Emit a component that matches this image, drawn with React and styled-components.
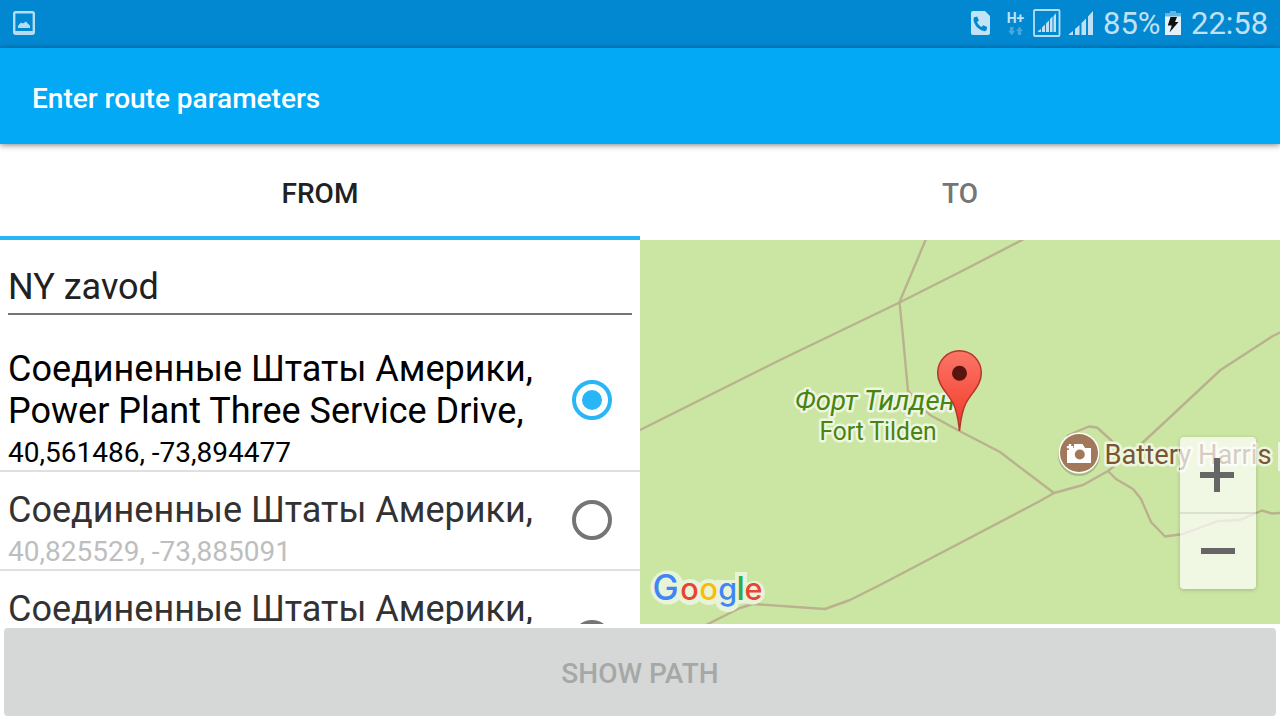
import React from 'react';
import styled, { createGlobalStyle } from 'styled-components';

const GlobalStyle = createGlobalStyle`
  * { box-sizing: border-box; }
  body { margin: 0; background: #fff; font-family: Roboto, "Noto Sans", sans-serif; }
`;

const Screen = styled.div`
  width: 1280px;
  height: 720px;
  display: flex;
  flex-direction: column;
  overflow: hidden;
  background: #fff;
`;

const StatusBar = styled.div`
  height: 48px;
  flex: none;
  display: flex;
  align-items: center;
  background: #0288d1;
  color: #c0e1f4;
  padding: 0 14px 0 12px;
  font-size: 31px;
  line-height: 48px;
`;

const StatusIcon = styled.svg`
  display: block;
  flex: none;
  height: 48px;
  width: ${(p) => p.$w}px;
  margin-left: ${(p) => p.$gap || 0}px;
`;

const Spacer = styled.div`
  flex: 1;
`;

const StatusText = styled.span`
  width: ${(p) => p.$w}px;
  margin-left: ${(p) => p.$gap}px;
  white-space: nowrap;
  font-size: ${(p) => p.$size}px;
`;

const AppBar = styled.header`
  height: 96px;
  flex: none;
  display: flex;
  align-items: center;
  padding: 4px 32px 0;
  background: #03a9f4;
  box-shadow: 0 1px 6px rgba(0, 0, 0, 0.5);
  z-index: 1;
`;

const Title = styled.h1`
  margin: 0;
  color: #fff;
  font-size: 28px;
  line-height: 33px;
  font-weight: 500;
`;

const Tabs = styled.nav`
  height: 96px;
  flex: none;
  display: grid;
  grid-template-columns: 1fr 1fr;
`;

const Tab = styled.div`
  display: flex;
  align-items: center;
  justify-content: center;
  padding-top: 6px;
  border-bottom: 4px solid ${(p) => (p.$active ? '#29b6f6' : 'transparent')};
  color: ${(p) => (p.$active ? '#212121' : '#757575')};
  font-size: 28px;
  font-weight: 500;
`;

const Body = styled.main`
  height: 384px;
  flex: none;
  display: grid;
  grid-template-columns: 640px 640px;
  overflow: hidden;
`;

const SearchPane = styled.section`
  height: 384px;
  overflow: hidden;
`;

const Field = styled.div`
  height: 75px;
  margin: 0 8px 16px;
  padding-top: 26px;
  border-bottom: 2px solid #757575;
  color: #212121;
  font-size: 36px;
  line-height: 42px;
`;

const Row = styled.div`
  height: ${(p) => (p.$lines === 2 ? 141 : 99)}px;
  display: flex;
  align-items: center;
  justify-content: space-between;
  padding: 0 28px 0 8px;
  border-bottom: 2px solid #dfdfdf;
`;

const Place = styled.div`
  align-self: flex-start;
  width: 540px;
  padding-top: 17px;
`;

const Address = styled.div`
  height: ${(p) => p.$lines * 42}px;
  white-space: pre-line;
  font-size: 36px;
  line-height: 42px;
  color: ${(p) => (p.$selected ? '#000' : '#323232')};
`;

const Coordinates = styled.div`
  padding-top: 4px;
  font-size: 28px;
  line-height: 33px;
  color: ${(p) => (p.$selected ? '#000' : '#bebebe')};
`;

const Radio = styled.span`
  width: 40px;
  height: 40px;
  flex: none;
  display: flex;
  align-items: center;
  justify-content: center;
  border: 4px solid ${(p) => (p.$selected ? '#29b6f6' : '#757575')};
  border-radius: 50%;
  margin-bottom: 1px;
  &::after {
    content: '';
    width: 20px;
    height: 20px;
    border-radius: 50%;
    background: ${(p) => (p.$selected ? '#29b6f6' : 'transparent')};
  }
`;

const MapPane = styled.section`
  position: relative;
  height: 384px;
  overflow: hidden;
  background: #cbe6a3;
`;

const MapDrawing = styled.svg`
  display: block;
  width: 640px;
  height: 384px;
  font-family: Roboto, "Noto Sans", sans-serif;
`;

const MapLabel = styled.text`
  fill: ${(p) => p.$color};
  stroke: #eef6e1;
  stroke-width: 5px;
  stroke-linejoin: round;
  paint-order: stroke;
  font-size: ${(p) => p.$size}px;
  font-style: ${(p) => (p.$italic ? 'italic' : 'normal')};
`;

const ZoomControls = styled.div`
  position: absolute;
  right: 24px;
  top: 197px;
  width: 76px;
  height: 152px;
  display: flex;
  flex-direction: column;
  background: rgba(255, 255, 255, 0.7);
  border-radius: 4px;
  box-shadow: 0 1px 4px rgba(0, 0, 0, 0.2);
`;

const ZoomButton = styled.div`
  flex: 1;
  & + & {
    border-top: 2px solid rgba(0, 0, 0, 0.09);
  }
  svg {
    display: block;
  }
`;

const Footer = styled.footer`
  height: 96px;
  flex: none;
  padding: 4px;
  display: flex;
`;

const PathButton = styled.div`
  flex: 1;
  display: flex;
  align-items: center;
  justify-content: center;
  padding-top: 2px;
  border-radius: 4px;
  background: #d6d8d7;
  color: #a6a8a7;
  font-size: 28px;
  font-weight: 500;
`;

const ROADS = [
  'M640 430L677 411.5L780 360L899.5 302.5L960 272L1024 239',
  'M926 239L899.5 302L903 337L908 391L930 415L959.5 431L1000 452L1054 493',
  'M706 625L740 608L753 604L825 609L850 600L880 585L1040 501L1054 493L1083 485L1108 471L1140 445L1167 420L1220.5 370L1272 336.5L1281 332',
  'M1067 436L1078 431L1089 426.5L1097 427.5L1112 441L1127 456',
  'M1108 471L1116 479L1133 489L1141 499L1151 522L1165 536.5L1183 534L1218 521L1240 520L1262 510.5L1272 513.5L1281 513',
];

const LOGO = [
  ['G', 652.5, '#4285f4', 35],
  ['o', 680.3, '#ea4335', 30.5],
  ['o', 699.6, '#fbbc05', 30.5],
  ['g', 718.2, '#4285f4', 30.5],
  ['l', 736.6, '#34a853', 33],
  ['e', 744.4, '#ea4335', 30.5],
];

const PLACES = [
  { address: 'Соединенные Штаты Америки,\nPower Plant Three Service Drive,', at: '40,561486, -73,894477', lines: 2, selected: true },
  { address: 'Соединенные Штаты Америки,', at: '40,825529, -73,885091', lines: 1 },
  { address: 'Соединенные Штаты Америки,', at: '', lines: 2 },
];

function StatusIcons() {
  return (
    <StatusBar>
      <StatusIcon $w={24} viewBox="12 0 24 48">
        <rect x="14.2" y="12.2" width="19.6" height="21.6" rx="1.5" fill="none" stroke="#b5dcf2" strokeWidth="2.4" />
        <path d="M14 31h20v3H14zM18 28v-2.2l3-3.2 2 1 3-2.2 2.2 2.6 1.8 1.5V28z" fill="#b5dcf2" />
      </StatusIcon>
      <Spacer />
      <StatusIcon $w={20} viewBox="970 0 20 48">
        <path d="M973 11h12l5 5v17a2 2 0 0 1-2 2h-15a2 2 0 0 1-2-2V13a2 2 0 0 1 2-2z" fill="#c0e3f5" />
        <path d="M974.2 17.3l3-.7 1.7 4-1.9 1.5c1 2.2 2.4 3.8 4.5 5l1.7-1.9 4 1.8-.7 3.1c-.3 1-1.5 1.2-2.5 1-5-.7-9.8-5.7-10.4-11-.1-1 0-2.5.6-2.8z" fill="#0288d1" />
      </StatusIcon>
      <StatusIcon $w={19} $gap={16} viewBox="1006 0 19 48">
        <text x="1006.7" y="22.6" fontFamily="Roboto" fontSize="14.5" fontWeight="700" fill="#c0e1f4" textLength="17.5" lengthAdjust="spacingAndGlyphs">H+</text>
        <path d="M1010 27h3.4v4h1.8l-3.5 4.2-3.5-4.2h1.8zM1017.8 35h3.4v-4h1.8l-3.5-4.2-3.5 4.2h1.8z" fill="#45a7de" />
      </StatusIcon>
      <StatusIcon $w={28} $gap={8} viewBox="1033 0 28 48">
        <rect x="1034" y="10" width="25.5" height="26" rx="1" fill="none" stroke="#b5dcf2" strokeWidth="1.8" />
        <path d="M1038 32v-1l3-2v3zM1042 32v-4.5l3-3V32zM1046 32v-8.5l3-3V32zM1050 32V19l2.5-2.5V32zM1053.5 32V16l2.5-2.8V32z" fill="#c0e1f4" />
      </StatusIcon>
      <StatusIcon $w={25} $gap={8} viewBox="1069 0 25 48">
        <path d="M1069 35v-1l4-3v4zM1075 35v-6l4.5-4v10zM1081.5 35V23l4.5-4.5V35zM1088 35V16.500l5-5.500v24z" fill="#c0e1f4" />
      </StatusIcon>
      <StatusText $w={56} $gap={9} $size={31}>85%</StatusText>
      <StatusIcon $w={18} $gap={6} viewBox="1165 0 18 48">
        <path d="M1170 11h6v2h5v4h-16v-4h5z" fill="#62b5e3" />
        <path d="M1165 16.500h16V35h-16z" fill="#e3f2fa" />
        <path d="M1170.500 17h6.500l-2 5h3.500l-9 10.500 2.300-7h-4z" fill="#111" />
      </StatusIcon>
      <StatusText $w={75} $gap={8} $size={31}>22:58</StatusText>
    </StatusBar>
  );
}

function RouteMap() {
  return (
    <MapPane>
      <MapDrawing viewBox="640 240 640 384">
        <defs>
          <linearGradient id="pin" x1="0" y1="0" x2="0" y2="1">
            <stop offset="0" stopColor="#fb7668" />
            <stop offset="0.65" stopColor="#f64d3c" />
            <stop offset="1" stopColor="#e93528" />
          </linearGradient>
        </defs>
        <g fill="none" stroke="#bab18f" strokeWidth="2.4" strokeLinejoin="round">
          {ROADS.map((d) => <path key={d} d={d} />)}
        </g>
        <MapLabel $color="#46850f" $size={27} $italic x="795" y="410" textLength="160" lengthAdjust="spacingAndGlyphs">Форт Тилден</MapLabel>
        <MapLabel $color="#46850f" $size={25} x="819.5" y="440" textLength="117" lengthAdjust="spacingAndGlyphs">Fort Tilden</MapLabel>
        <MapLabel $color="#795534" $size={27} x="1104.500" y="464" textLength="167" lengthAdjust="spacingAndGlyphs">Battery Harris</MapLabel>
        <path d="M1278 442h3v29h-3z" fill="#eef6e1" />
        <circle cx="1079" cy="455" r="21" fill="#6b7a55" opacity="0.4" />
        <circle cx="1079" cy="453" r="20.500" fill="#fff" />
        <circle cx="1079" cy="453" r="19" fill="#a1785a" />
        <path d="M1067 450h4v-2h3v-4h8.500l2.500 4h6v15h-24z" fill="#fff" />
        <path d="M1068.800 444h2.400v2h2v2.200h-2v2h-2.400v-2h-2V446h2z" fill="#fff" />
        <circle cx="1079.800" cy="454.500" r="5" fill="#a1785a" />
        <path d="M959.500 431C958.500 423 958 414 953.500 404C948 393 937.700 386 937.700 373A21.800 22.200 0 0 1 981.300 373C981.300 386 971 393 965.500 404C961 414 960.500 423 959.500 431Z" fill="url(#pin)" stroke="#b3362a" strokeWidth="1.500" />
        <circle cx="959.500" cy="373.300" r="7.500" fill="#5a140f" />
        <g fill="#e8f4d7">
          <circle cx="667.500" cy="587.500" r="17" />
          <circle cx="690" cy="592" r="13" />
          <circle cx="709" cy="592" r="13" />
          <path d="M716 580h19v-8h12v11c9-5 17 0 18 9l-1 6c-5 7-12 8-18 5l-7 1c-3 11-19 10-23 1z" />
        </g>
        <text y="600" fontFamily="Inter" fontWeight="500">
          {LOGO.map(([c, x, color, size]) => (
            <tspan key={x} x={x} fill={color} fontSize={size}>{c}</tspan>
          ))}
        </text>
      </MapDrawing>
      <ZoomControls>
        <ZoomButton>
          <svg width="76" height="75"><path d="M20 35h14V21h6v14h14v6H40v14h-6V41H20z" fill="#666" /></svg>
        </ZoomButton>
        <ZoomButton>
          <svg width="76" height="74"><path d="M21 34h34v6H21z" fill="#666" /></svg>
        </ZoomButton>
      </ZoomControls>
    </MapPane>
  );
}

export default function App() {
  return (
    <Screen>
      <GlobalStyle />
      <StatusIcons />
      <AppBar><Title>Enter route parameters</Title></AppBar>
      <Tabs>
        <Tab $active>FROM</Tab>
        <Tab>TO</Tab>
      </Tabs>
      <Body>
        <SearchPane>
          <Field>NY zavod</Field>
          {PLACES.map((p, i) => (
            <Row key={i} $lines={p.lines}>
              <Place>
                <Address $lines={p.lines} $selected={p.selected}>{p.address}</Address>
                <Coordinates $selected={p.selected}>{p.at}</Coordinates>
              </Place>
              <Radio $selected={p.selected} />
            </Row>
          ))}
        </SearchPane>
        <RouteMap />
      </Body>
      <Footer><PathButton>SHOW PATH</PathButton></Footer>
    </Screen>
  );
}
